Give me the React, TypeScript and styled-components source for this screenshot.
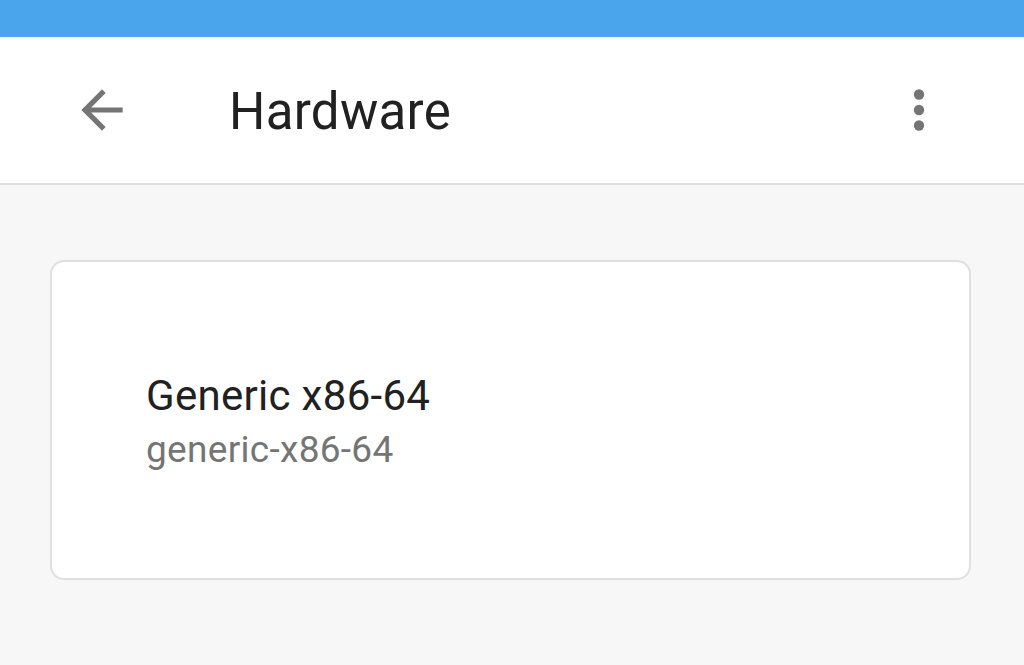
import React from "react";
import styled, { createGlobalStyle } from "styled-components";

const GlobalStyle = createGlobalStyle`
  html, body {
    margin: 0;
    padding: 0;
    background: #f7f7f7;
    font-family: Roboto, "Noto Sans", sans-serif;
  }
`;

const Page = styled.div`
  width: 1024px;
  height: 665px;
  display: flex;
  flex-direction: column;
  background: #f7f7f7;
  overflow: hidden;
`;

const StatusBar = styled.div`
  height: 37px;
  background: #4ba5ec;
  flex-shrink: 0;
`;

const Toolbar = styled.header`
  height: 146px;
  background: #ffffff;
  border-bottom: 2px solid #e0e0e0;
  display: flex;
  align-items: center;
  padding: 0 74px 0 71px;
  flex-shrink: 0;
`;

const IconButton = styled.button`
  width: 62px;
  height: 62px;
  padding: 0;
  border: none;
  background: none;
  display: flex;
  align-items: center;
  justify-content: center;
  color: #757575;
`;

const Title = styled.h1`
  flex: 1;
  margin: 0 0 -2px 96px;
  font-size: 51px;
  font-weight: 400;
  color: #212121;
  letter-spacing: 0.3px;
`;

const Content = styled.main`
  padding: 75px 53px 0 50px;
`;

const Card = styled.section`
  height: 320px;
  background: #ffffff;
  border: 2px solid #e0e0e0;
  border-radius: 14px;
  display: flex;
  flex-direction: column;
  justify-content: center;
  padding: 5px 94px 0;
  box-sizing: border-box;
`;

const ItemName = styled.div`
  font-size: 42px;
  color: #212121;
  line-height: 50px;
  letter-spacing: 0.3px;
`;

const ItemId = styled.div`
  font-size: 37px;
  color: #757575;
  line-height: 50px;
  margin-top: 4px;
  letter-spacing: 0.3px;
`;

const BackIcon = () => (
  <svg width="62" height="62" viewBox="0 0 24 24" fill="currentColor">
    <path d="M20 11H7.83l5.59-5.59L12 4l-8 8 8 8 1.41-1.41L7.83 13H20v-2z" />
  </svg>
);

const MoreIcon = () => (
  <svg width="64" height="64" viewBox="0 0 24 24" fill="currentColor">
    <circle cx="12" cy="6" r="2" />
    <circle cx="12" cy="12" r="2" />
    <circle cx="12" cy="18" r="2" />
  </svg>
);

export default function App() {
  return (
    <Page>
      <GlobalStyle />
      <StatusBar />
      <Toolbar>
        <IconButton aria-label="Back">
          <BackIcon />
        </IconButton>
        <Title>Hardware</Title>
        <IconButton aria-label="More">
          <MoreIcon />
        </IconButton>
      </Toolbar>
      <Content>
        <Card>
          <ItemName>Generic x86-64</ItemName>
          <ItemId>generic-x86-64</ItemId>
        </Card>
      </Content>
    </Page>
  );
}
